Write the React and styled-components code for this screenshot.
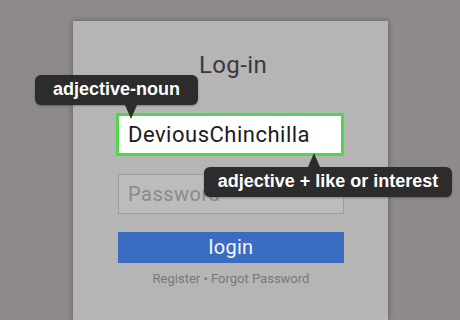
import React from 'react'
import styled, {createGlobalStyle} from 'styled-components'

const Global = createGlobalStyle`
  html, body {
    margin: 0;
    padding: 0;
    background: #8e8a89;
    overflow: hidden;
  }
`
const Page = styled.div`
  width: 460px;
  height: 320px;
  display: flex;
  padding-left: 73px;
  padding-top: 21px;
  box-sizing: border-box;
  overflow: hidden;
`
const Card = styled.div`
  position: relative;
  width: 315px;
  height: 299px;
  background: #b5b5b5;
  box-shadow: 0 0 6px rgba(0, 0, 0, 0.35);
  display: flex;
  flex-direction: column;
  align-items: center;
  box-sizing: border-box;
  padding-top: 30px;
  font-family: Roboto, "Liberation Sans", sans-serif;
`
const Title = styled.div`
  font-size: 24px;
  line-height: 28px;
  letter-spacing: 0.4px;
  color: #3a3a3a;
  height: 28px;
  margin-bottom: 34px;
  margin-left: 5px;
`
const Field = styled.div`
  box-sizing: border-box;
  width: ${p => (p.highlight ? '228px' : '226px')};
  height: ${p => (p.highlight ? '43px' : '40px')};
  margin-left: ${p => (p.highlight ? '-1px' : '1px')};
  background: ${p => (p.highlight ? '#ffffff' : '#bcbcbc')};
  border: ${p => (p.highlight ? '3px solid #4fd64a' : '1px solid #9c9c9c')};
  display: flex;
  align-items: center;
  padding-left: 9px;
  font-size: ${p => (p.highlight ? '22px' : '20px')};
  letter-spacing: 0.5px;
  color: ${p => (p.highlight ? '#1c1c1c' : '#8a8a8a')};
  margin-bottom: 18px;
`
const Button = styled.div`
  width: 226px;
  height: 31px;
  margin-left: 1px;
  background: #3a6dc2;
  color: #f4f6fb;
  font-size: 20px;
  letter-spacing: 0.3px;
  display: flex;
  align-items: center;
  justify-content: center;
  padding-bottom: 2px;
  box-sizing: border-box;
`
const Links = styled.div`
  margin-top: 8px;
  font-size: 13px;
  color: #787878;
  margin-left: 1px;
`
const Tip = styled.div`
  position: absolute;
  left: ${p => p.left}px;
  top: ${p => p.top}px;
  width: ${p => p.width}px;
  height: 30px;
  background: #2c2c2c;
  border-radius: 6px;
  box-shadow: 0 1px 2px rgba(0, 0, 0, 0.3);
  color: #ffffff;
  font-family: "Liberation Sans", Arial, sans-serif;
  font-weight: bold;
  font-size: 18px;
  display: flex;
  align-items: center;
  justify-content: center;
  padding-bottom: 2px;
  box-sizing: border-box;
  white-space: nowrap;
  &::after {
    content: '';
    position: absolute;
    left: ${p => p.arrow - 6}px;
    ${p => (p.up ? 'bottom: 100%;' : 'top: 100%;')}
    border-left: 6px solid transparent;
    border-right: 6px solid transparent;
    ${p => (p.up ? 'border-bottom' : 'border-top')}: 14px solid #2c2c2c;
  }
`

export default function App () {
  return (
    <>
      <Global />
      <Page>
        <Card>
          <Title>Log-in</Title>
          <Field highlight>DeviousChinchilla</Field>
          <Field>Password</Field>
          <Button>login</Button>
          <Links>Register • Forgot Password</Links>
          <Tip left={-38} top={54} width={163} arrow={96}>adjective-noun</Tip>
          <Tip left={131} top={146} width={248} arrow={110} up>adjective + like or interest</Tip>
        </Card>
      </Page>
    </>
  )
}
